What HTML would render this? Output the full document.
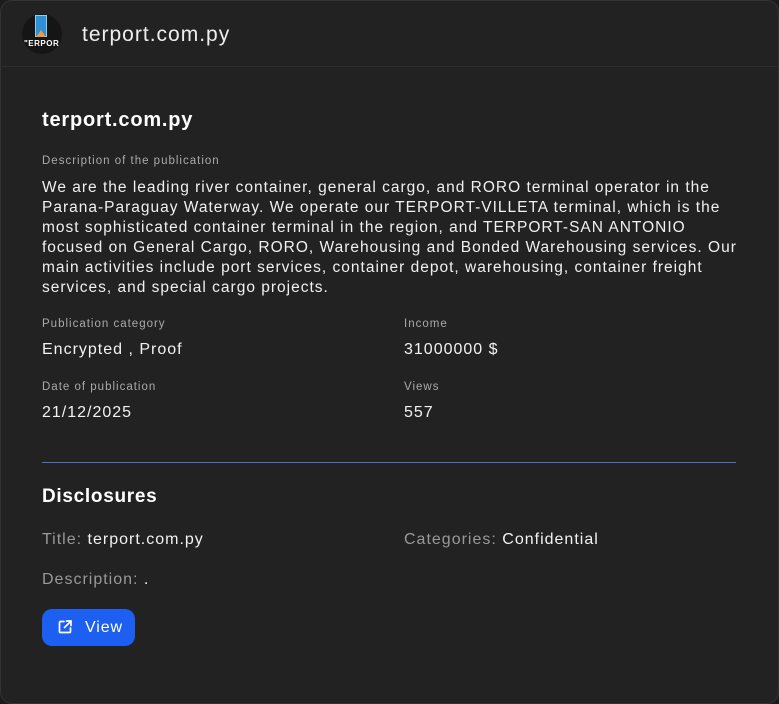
<!DOCTYPE html>
<html><head><style>
*{margin:0;padding:0;box-sizing:border-box}
body{width:779px;height:704px;background:#1b1b1b;font-family:"Liberation Sans",sans-serif;color:#fff;overflow:hidden;letter-spacing:0.9px}
.card{position:absolute;left:0;top:0;width:779px;height:704px;background:#222;box-shadow:inset 0 0 0 1px #333;border-radius:12px;overflow:hidden}
.hdr{height:67px;border-bottom:1px solid #2c2c2c;position:relative}
.logo{position:absolute;left:22px;top:14px;width:40px;height:40px;border-radius:50%;background:#151515;letter-spacing:0}
.hdr .t{position:absolute;left:82px;top:23px;font-size:21px;color:#eee;letter-spacing:1px}
.abs{position:absolute}
.lbl{font-size:11.5px;color:#aaa;letter-spacing:1px}
.val{font-size:16px;color:#f2f2f2;letter-spacing:1px}
.desc{position:absolute;left:42px;top:178px;width:720px;font-size:15.5px;line-height:20px;color:#f0f0f0;letter-spacing:1px;white-space:nowrap}
.btn{position:absolute;left:42px;top:609px;width:93px;height:37px;background:#1d5ff0;border-radius:10px;font-size:16px;color:#fff}
</style></head><body>
<div class="card">
<div class="hdr">
 <div class="logo">
  <div class="abs" style="left:13px;top:1px;width:12px;height:22px;background:#2d8fd8;border:1px solid #9cd"></div>
  <div class="abs" style="left:14px;top:16px;width:0;height:0;border-left:5px solid transparent;border-right:5px solid transparent;border-bottom:7px solid #e89a4a"></div>
  <div class="abs" style="left:2px;top:25px;font-size:8px;font-weight:bold;color:#fff;letter-spacing:0.5px">"ERPOR</div>
 </div>
 <div class="t">terport.com.py</div>
</div>
<div class="abs" style="left:42px;top:109px;font-size:20px;font-weight:bold;letter-spacing:0.8px">terport.com.py</div>
<div class="abs lbl" style="left:42px;top:155px">Description of the publication</div>
<div class="desc">We are the leading river container, general cargo, and RORO terminal operator in the<br>Parana-Paraguay Waterway. We operate our TERPORT-VILLETA terminal, which is the<br>most sophisticated container terminal in the region, and TERPORT-SAN ANTONIO<br>focused on General Cargo, RORO, Warehousing and Bonded Warehousing services. Our<br>main activities include port services, container depot, warehousing, container freight<br>services, and special cargo projects.</div>
<div class="abs lbl" style="left:42px;top:318px">Publication category</div>
<div class="abs val" style="left:42px;top:341px">Encrypted , Proof</div>
<div class="abs lbl" style="left:404px;top:318px">Income</div>
<div class="abs val" style="left:404px;top:341px">31000000 $</div>
<div class="abs lbl" style="left:42px;top:381px">Date of publication</div>
<div class="abs val" style="left:42px;top:404px">21/12/2025</div>
<div class="abs lbl" style="left:404px;top:381px">Views</div>
<div class="abs val" style="left:404px;top:404px">557</div>
<div class="abs" style="left:42px;top:462px;width:694px;height:1px;background:#4f6fd0"></div>
<div class="abs" style="left:42px;top:486px;font-size:19px;font-weight:bold;letter-spacing:0.7px">Disclosures</div>
<div class="abs val" style="left:42px;top:531px"><span style="color:#999">Title:</span> terport.com.py</div>
<div class="abs val" style="left:404px;top:531px"><span style="color:#999">Categories:</span> Confidential</div>
<div class="abs val" style="left:42px;top:571px"><span style="color:#999">Description:</span> .</div>
<div class="btn">
 <svg class="abs" style="left:15px;top:10px" width="16" height="16" viewBox="0 0 16 16" fill="none" stroke="#fff" stroke-width="1.7" stroke-linecap="round"><path d="M7 2.5H3.5a1 1 0 0 0-1 1v9a1 1 0 0 0 1 1h9a1 1 0 0 0 1-1V9"/><path d="M9.5 2h4.5v4.5M14 2L7.5 8.5"/></svg>
 <span class="abs" style="left:43px;top:10px">View</span>
</div>
</div>
</body></html>
